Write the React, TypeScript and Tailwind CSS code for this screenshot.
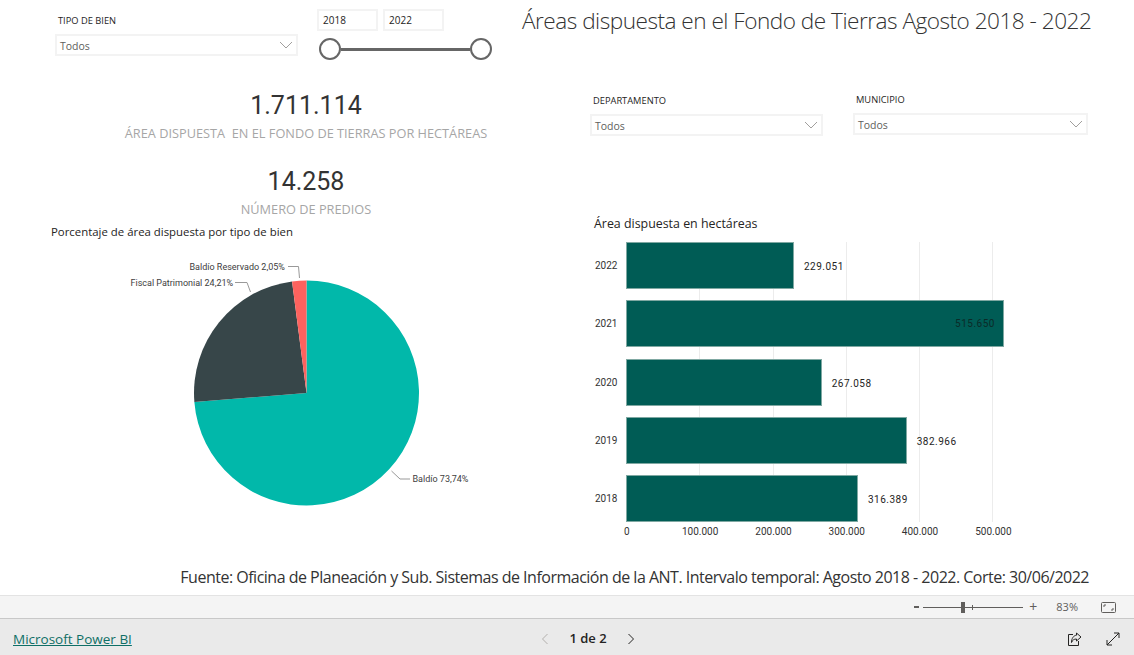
const din = { fontFamily: "Roboto, sans-serif" };

const years = [
    { year: "2022", value: 229051, label: "229.051" },
    { year: "2021", value: 515650, label: "515.650" },
    { year: "2020", value: 267058, label: "267.058" },
    { year: "2019", value: 382966, label: "382.966" },
    { year: "2018", value: 316389, label: "316.389" },
];

const ticks = ["100.000", "200.000", "300.000", "400.000", "500.000"];

const slices = [
    { pct: 73.74, color: "#01b8aa" },
    { pct: 24.21, color: "#374649" },
    { pct: 2.05, color: "#fd625e" },
];

function Chevron({ className }: { className?: string }) {
    return (
        <svg width="14" height="8" viewBox="0 0 14 8" fill="none" stroke="currentColor" strokeWidth="1" className={className}>
            <path d="M1 1l6 6 6-6" />
        </svg>
    );
}

function Slicer({ label, width, className }: { label: string; width: string; className?: string }) {
    return (
        <div className={className}>
            <div className="pl-[3px] text-[9.3px] leading-[14px] text-[#252423]">{label}</div>
            <div className={`${width} mt-[6px] flex h-[22px] items-center justify-between border-2 border-[#f3f3f3] pl-[3px] pr-[3px]`}>
                <span className="mt-[3px] text-[10.5px] text-[#605e5c]">Todos</span>
                <Chevron className="text-[#a19f9d]" />
            </div>
        </div>
    );
}

function Kpi({ value, label, labelClass, className }: { value: string; label: string; labelClass: string; className?: string }) {
    return (
        <div className={`text-center ${className ?? ""}`}>
            <div style={din} className="text-[25px] leading-[32px] text-[#333333]">{value}</div>
            <div className={`${labelClass} whitespace-pre text-[12.75px] leading-[17px] text-[#a6a6a6]`}>{label}</div>
        </div>
    );
}

function PieChart() {
    const cx = 306.5;
    const cy = 393;
    const r = 112.5;
    let start = 0;
    const arcs = slices.map((s) => {
        const end = start + (s.pct / 100) * Math.PI * 2;
        const x1 = cx + r * Math.sin(start);
        const y1 = cy - r * Math.cos(start);
        const x2 = cx + r * Math.sin(end);
        const y2 = cy - r * Math.cos(end);
        const large = s.pct > 50 ? 1 : 0;
        start = end;
        return { d: `M${cx} ${cy}L${x1} ${y1}A${r} ${r} 0 ${large} 1 ${x2} ${y2}Z`, color: s.color };
    });
    return (
        <svg viewBox="0 243 512 290" width="512" height="290" className="mt-[3px] block" style={din}>
            {arcs.map((a) => (
                <path key={a.color} d={a.d} fill={a.color} />
            ))}
            <g fill="none" stroke="#999999" strokeWidth="1">
                <path d="M288 266.5h10.5l1 11.5" />
                <path d="M235 282.5h12l3.5 9.5" />
                <path d="M391.5 471l8.5 8h10" />
            </g>
            <g fontSize="9" fill="#404040">
                <text x="189.5" y="270">Baldío Reservado 2,05%</text>
                <text x="130.5" y="286">Fiscal Patrimonial 24,21%</text>
                <text x="412.5" y="482">Baldío 73,74%</text>
            </g>
        </svg>
    );
}

function BarChart() {
    return (
        <div style={din} className="ml-[82px]">
            <div className="relative w-[430px]">
                <div className="absolute inset-y-0 left-[33px] flex">
                    {ticks.map((t) => (
                        <div key={t} className="h-full w-[73.3px] border-r border-[#ececec]" />
                    ))}
                </div>
                <div className="relative flex flex-col gap-[11.3px]">
                    {years.map((y) => {
                        const width = (y.value / 100000) * 73.3;
                        const inside = y.value > 500000;
                        return (
                            <div key={y.year} className="flex h-[47px] items-center">
                                <span className="w-[32px] pl-[1px] text-[10px] text-[#333333]">{y.year}</span>
                                <div
                                    className="flex h-full items-center justify-end border border-[#7fa8a2] bg-[#005c55] pr-[8px] text-[10px] tracking-[0.5px] text-[#0b2b28]"
                                    style={{ width }}
                                >
                                    {inside ? y.label : null}
                                </div>
                                {!inside ? <span className="ml-[10px] pt-[2px] text-[10px] tracking-[0.5px] text-[#252423]">{y.label}</span> : null}
                            </div>
                        );
                    })}
                </div>
            </div>
            <div className="mt-[1px] flex h-[16px] items-center text-[10px] text-[#333333]">
                <span className="ml-[30px] w-[3px]">0</span>
                {ticks.map((t) => (
                    <span key={t} className="w-[73.3px] shrink-0 translate-x-[36.5px] text-center">{t}</span>
                ))}
            </div>
        </div>
    );
}

function ZoomBar() {
    return (
        <div className="flex h-[24px] shrink-0 items-center justify-end border-y border-t-[#e3e3e3] border-b-[#c8c8c8] bg-[#f4f4f4] pr-[18px] text-[#605e5c]">
            <span className="mr-[4px] h-[2px] w-[5px] bg-[#605e5c]" />
            <div className="relative h-[1px] w-[100px] bg-[#605e5c]">
                <span className="absolute left-[38px] top-[-5px] h-[11px] w-[4px] bg-[#605e5c]" />
                <span className="absolute left-[49px] top-[-2px] h-[5px] w-[1px] bg-[#605e5c]" />
            </div>
            <span className="ml-[6px] text-[14px] leading-none">+</span>
            <span className="ml-[19px] text-[11px]">83%</span>
            <svg width="15" height="11" viewBox="0 0 15 11" fill="none" className="ml-[23px]" stroke="#605e5c">
                <rect x="0.5" y="0.5" width="14" height="10" rx="1" />
                <path d="M3 5V3h2M12 6v2h-2" />
            </svg>
        </div>
    );
}

function BottomBar() {
    return (
        <div className="grid h-[36px] shrink-0 grid-cols-3 items-center bg-[#eaeaea] pl-[13px] pr-[14px] pt-[4px]">
            <a href="#" className="text-[13.5px] font-medium text-[#0f6f66] underline">Microsoft Power BI</a>
            <div className="flex items-center justify-center gap-[20px] pl-[43px]">
                <svg width="8" height="12" viewBox="0 0 8 12" fill="none" stroke="#b3b0ad"><path d="M6.5 1l-5 5 5 5" /></svg>
                <span className="text-[13px] font-semibold text-[#252423]">1 de 2</span>
                <svg width="8" height="12" viewBox="0 0 8 12" fill="none" stroke="#252423"><path d="M1.5 1l5 5-5 5" /></svg>
            </div>
            <div className="flex items-center justify-end gap-[24px]">
                <svg width="15" height="15" viewBox="0 0 15 15" fill="none" stroke="#252423">
                    <path d="M6 2.5H1.5v11h10V9" />
                    <path d="M9.5 1l4.5 4-4.5 4V7C7 7 5.5 8 4.5 10.5 4.5 6.5 6.5 3.5 9.5 3.2z" />
                </svg>
                <svg width="14" height="14" viewBox="0 0 14 14" fill="none" stroke="#252423">
                    <path d="M1 13L13 1M8 1h5v5M1 8v5h5" />
                </svg>
            </div>
        </div>
    );
}

export default function App() {
    return (
        <div
            className="flex h-[655px] w-full flex-col overflow-hidden bg-white"
            style={{ fontFamily: "'Open Sans', sans-serif" }}
        >
            <div className="flex h-[595px] shrink-0 flex-col">
                <div className="flex flex-1">
                    <div className="w-[512px] shrink-0">
                        <div className="flex pl-[55px] pt-[14px]">
                            <Slicer label="TIPO DE BIEN" width="w-[243px]" />
                            <div className="ml-[19px] -mt-[5px]">
                                <div className="flex gap-[5px]">
                                    <div className="flex h-[22px] w-[61px] items-center border-2 border-[#f3f3f3] pl-[4px] text-[10px] text-[#252423]">2018</div>
                                    <div className="flex h-[22px] w-[61px] items-center border-2 border-[#f3f3f3] pl-[4px] text-[10px] text-[#252423]">2022</div>
                                </div>
                                <div className="ml-[2px] mt-[7px] flex w-[173px] items-center">
                                    <span className="h-[22px] w-[22px] shrink-0 rounded-full border-2 border-[#666666] bg-white" />
                                    <span className="h-[3px] flex-1 bg-[#666666]" />
                                    <span className="h-[22px] w-[22px] shrink-0 rounded-full border-2 border-[#666666] bg-white" />
                                </div>
                            </div>
                        </div>
                        <Kpi value="1.711.114" label="ÁREA DISPUESTA  EN EL FONDO DE TIERRAS POR HECTÁREAS" labelClass="mt-[3px]" className="ml-[100px] mt-[30px]" />
                        <Kpi value="14.258" label="NÚMERO DE PREDIOS" labelClass="mt-[3px]" className="ml-[100px] mt-[24px]" />
                        <div className="ml-[51px] mt-[6px] text-[11.4px] leading-[16px] text-[#252423]">Porcentaje de área dispuesta por tipo de bien</div>
                        <PieChart />
                    </div>
                    <div className="min-w-0 flex-1">
                        <h1 className="ml-[10px] mt-[3px] text-[22.6px] font-light leading-[36px] tracking-[-0.5px] whitespace-nowrap text-[#333333]">
                            Áreas dispuesta en el Fondo de Tierras Agosto 2018 - 2022
                        </h1>
                        <div className="ml-[78px] mt-[55px] flex items-start">
                            <Slicer label="DEPARTAMENTO" width="w-[233px]" />
                            <Slicer label="MUNICIPIO" width="w-[235px]" className="ml-[30px] -mt-[1px]" />
                        </div>
                        <div className="ml-[82px] mt-[79px] text-[12.4px] leading-[18px] text-[#252423]">Área dispuesta en hectáreas</div>
                        <div className="mt-[9px]">
                            <BarChart />
                        </div>
                    </div>
                </div>
                <div className="pb-[6px] pr-[45px] text-right text-[16px] leading-[24px] tracking-[-0.5px] text-[#333333]">
                    Fuente: Oficina de Planeación y Sub. Sistemas de Información de la ANT. Intervalo temporal: Agosto 2018 - 2022. Corte: 30/06/2022
                </div>
            </div>
            <ZoomBar />
            <BottomBar />
        </div>
    );
}
